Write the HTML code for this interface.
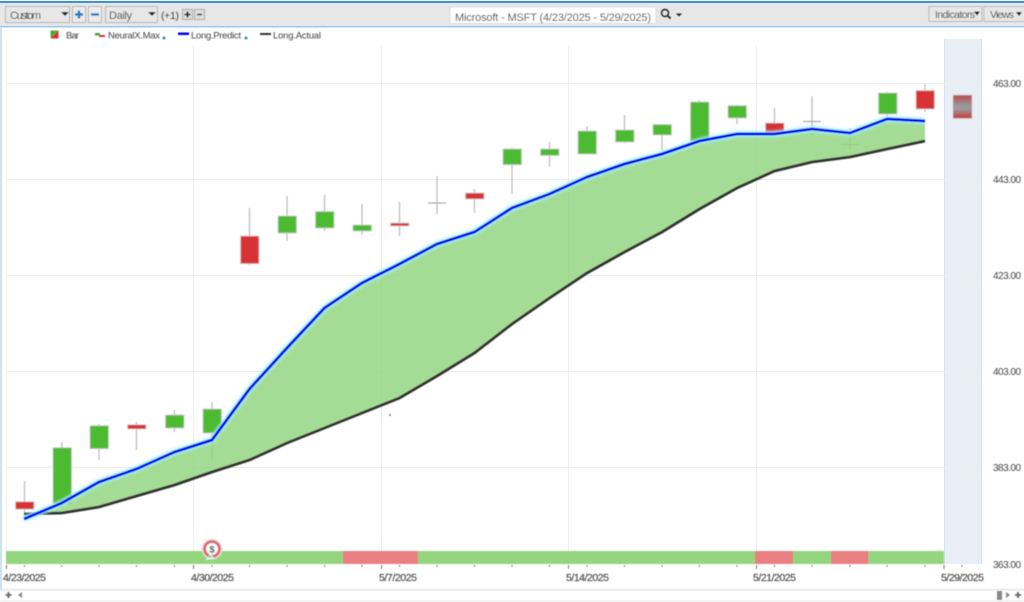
<!DOCTYPE html>
<html><head><meta charset="utf-8"><style>
html,body{margin:0;padding:0;background:#fff;width:1024px;height:602px;overflow:hidden}
svg{display:block}
text{font-family:"Liberation Sans",sans-serif;fill:#444}
</style></head><body>
<svg width="1024" height="602" viewBox="0 0 1024 602" xmlns="http://www.w3.org/2000/svg">
<defs>
<linearGradient id="gh" x1="0" y1="0" x2="0" y2="1"><stop offset="0" stop-color="#c0484c"/><stop offset=".45" stop-color="#999"/><stop offset=".6" stop-color="#999"/><stop offset="1" stop-color="#c8383c"/></linearGradient>
<filter id="soft" x="-5%" y="-5%" width="110%" height="110%"><feGaussianBlur stdDeviation="0.45"/></filter>
<filter id="glow" x="-5%" y="-5%" width="110%" height="110%"><feGaussianBlur stdDeviation="1.2"/></filter>
</defs>
<rect width="1024" height="602" fill="#fff"/>
<!-- toolbar -->
<rect x="0" y="0" width="1024" height="27" fill="#e7e7e7"/>
<rect x="0" y="0" width="1024" height="1" fill="#f6f6f6"/>
<rect x="0" y="1" width="1024" height="2" fill="#3d93d3"/>
<rect x="0" y="26" width="1024" height="1.5" fill="#9cc9ea"/>
<rect x="0" y="27" width="2" height="563" fill="#cfe2f1"/>
<g filter="url(#soft)">
<rect x="5.5" y="6.5" width="64" height="16" fill="#e7e7e7" stroke="#b4b4b4"/>
<text x="10" y="19" font-size="11" textLength="31">Custom</text>
<path d="M61 12h8l-4 4z" fill="#222"/>
<rect x="72.5" y="6.5" width="13" height="16" fill="#ececec" stroke="#b4b4b4"/>
<path d="M75 14.5h8M79 10.5v8" stroke="#1d7cc4" stroke-width="2.4"/>
<rect x="88.5" y="6.5" width="13" height="16" fill="#ececec" stroke="#b4b4b4"/>
<path d="M91 14.5h8" stroke="#1d7cc4" stroke-width="2.4"/>
<rect x="105.5" y="6.5" width="52" height="16" fill="#e7e7e7" stroke="#b4b4b4"/>
<text x="109" y="19" font-size="11" textLength="23">Daily</text>
<path d="M148 12h8l-4 4z" fill="#222"/>
<text x="161" y="19" font-size="10.500" textLength="18">(+1)</text>
<rect x="182.500" y="9.500" width="10" height="10" fill="#ddd" stroke="#aaa"/>
<path d="M184.500 14.500h6M187.500 11.500v6" stroke="#111" stroke-width="1.600"/>
<rect x="194.500" y="9.500" width="10" height="10" fill="#ddd" stroke="#aaa"/>
<path d="M197 14.500h5" stroke="#111" stroke-width="1.400"/>
<rect x="450" y="7" width="206" height="16.500" rx="1" fill="#fff" stroke="#ddd"/>
<text x="455" y="21" font-size="11" textLength="196">Microsoft - MSFT (4/23/2025 - 5/29/2025)</text>
<circle cx="665" cy="13" r="3.500" fill="none" stroke="#222" stroke-width="1.400"/>
<path d="M667.500 15.500l3 3" stroke="#222" stroke-width="1.800"/>
<path d="M676 13.500h6l-3 3z" fill="#222"/>
<rect x="929" y="6.500" width="53" height="15" fill="#e7e7e7" stroke="#b8b8b8"/>
<text x="935" y="18" font-size="10.500" textLength="40">Indicators</text>
<path d="M974 11.500h6l-3 4z" fill="#111"/>
<rect x="984" y="6.500" width="42" height="15" fill="#e7e7e7" stroke="#b8b8b8"/>
<text x="990" y="18" font-size="10.500" textLength="24">Views</text>
<path d="M1016 12h6l-3 4z" fill="#111"/>
<!-- legend -->
<rect x="50.500" y="30.500" width="8" height="8" fill="#d93036"/>
<path d="M50.500 30.500h8l-8 8z" fill="#44b02e"/>
<text x="66" y="38.500" font-size="9.500" textLength="13">Bar</text>
<path d="M95 33h5v2.500h-5z" fill="#3aa82c"/><path d="M99 35h6v2h-6z" fill="#d93036"/>
<text x="108" y="38.500" font-size="9.500" textLength="52">NeuralX.Max</text>
<circle cx="164" cy="38" r="1.500" fill="#3b8ea8"/>
<rect x="178" y="32.500" width="11" height="2.500" fill="#0000e6"/>
<text x="191" y="38.500" font-size="9.500" textLength="50">Long.Predict</text>
<circle cx="246" cy="38" r="1.500" fill="#3b8ea8"/>
<rect x="260" y="33" width="11" height="2" fill="#333"/>
<text x="273" y="38.500" font-size="9.500" textLength="48">Long.Actual</text>
</g>
<!-- forecast band -->
<rect x="944" y="39" width="38" height="525" fill="#e8eef6"/>
<path d="M944.500 39v525M981.500 39v525" stroke="#d3e3f3"/>
<!-- grid -->
<g stroke="#eeeeee" stroke-width="1">
<path d="M6 83.500H982M6 179.500H982M6 275.500H982M6 371.500H982M6 467.500H982"/>
<path d="M6.500 40V564M193.500 46V564M381.500 46V564M568.500 46V564M756.500 46V564"/>
</g>
<g filter="url(#soft)">
<!-- candles -->
<g stroke="#b9b9b9" stroke-width="1.200">
<path d="M24.500 481V515M61.800 442V508M99 424V460M136.500 422V450M174.500 410V432M212 402V461M249.500 208V265M287 196V241M324.500 195V231M362 204V235M399.500 202V236M437 176V214M474.500 189V213M512 148V194M549.500 142V167M587 126V154M624.500 115V143M662 124V151M699.500 100V141M737 105V124M774.500 108V135M812 96V135M850 128V150M887 92V116M925 84V112"/>
<path d="M428 203H446M803 121.500H821M841 144.500H859" stroke="#aaa"/>
</g>
<g stroke="#cccccc" stroke-width=".8">
<g fill="#d93036">
<rect x="15.500" y="501.700" width="18.500" height="7.500"/>
<rect x="127.500" y="424.700" width="18.500" height="4.300"/>
<rect x="240.500" y="236" width="18.500" height="27.700"/>
<rect x="390.500" y="223" width="18.500" height="3"/>
<rect x="465.500" y="193" width="18.500" height="6"/>
<rect x="765.500" y="123" width="18.500" height="10"/>
<rect x="916" y="90.500" width="18.500" height="18.500"/>
</g>
<g fill="#4dbb33">
<rect x="53" y="447.700" width="18.500" height="56"/>
<rect x="90" y="425.700" width="18.500" height="23"/>
<rect x="165.500" y="415" width="18.500" height="13"/>
<rect x="203" y="409" width="18.500" height="24"/>
<rect x="278" y="216" width="18.500" height="17"/>
<rect x="315.500" y="211.500" width="18.500" height="16.500"/>
<rect x="353" y="225" width="18.500" height="6"/>
<rect x="503" y="149" width="18.500" height="15.700"/>
<rect x="540.500" y="149" width="18.500" height="6.500"/>
<rect x="578" y="131" width="18.500" height="23"/>
<rect x="615.500" y="130" width="18.500" height="12"/>
<rect x="653" y="124.500" width="18.500" height="10.500"/>
<rect x="690.500" y="102" width="18.500" height="39"/>
<rect x="728" y="105.700" width="18.500" height="12.300"/>
<rect x="878.500" y="93" width="18.500" height="21"/>
</g>
<rect x="953" y="95" width="19" height="23.500" fill="url(#gh)"/>
</g>
<!-- area (translucent, drawn over candles) -->
<path d="M24 519L61.800 503L99 482L136.500 469L174.500 452L212 440L249.500 389L287 348L324.500 308L362 283L399.500 264L437 244L474.500 232L512 208L549.500 194L587 177L624.500 164L662 154L699.500 141L737 134L774.500 134L812 129L850 133L887 119L925 121L925 141L887 149L850 157L812 162L774.500 171L737 188L699.500 209L662 232L624.500 252L587 273L549.500 298L512 324L474.500 353L437 376L399.500 398L362 413L324.500 428L287 443L249.500 460L212 472L174.500 485L136.500 496L99 507L61.800 513L24 514Z" fill="#8fd37b" fill-opacity=".8"/>
<!-- lines -->
<path d="M24 514L61.800 513L99 507L136.500 496L174.500 485L212 472L249.500 460L287 443L324.500 428L362 413L399.500 398L437 376L474.500 353L512 324L549.500 298L587 273L624.500 252L662 232L699.500 209L737 188L774.500 171L812 162L850 157L887 149L925 141" fill="none" stroke="#333" stroke-width="2.800"/>
<path d="M24 519L61.800 503L99 482L136.500 469L174.500 452L212 440L249.500 389L287 348L324.500 308L362 283L399.500 264L437 244L474.500 232L512 208L549.500 194L587 177L624.500 164L662 154L699.500 141L737 134L774.500 134L812 129L850 133L887 119L925 121" fill="none" stroke="#9ff3fb" stroke-width="6" filter="url(#glow)"/>
<path d="M24 519L61.800 503L99 482L136.500 469L174.500 452L212 440L249.500 389L287 348L324.500 308L362 283L399.500 264L437 244L474.500 232L512 208L549.500 194L587 177L624.500 164L662 154L699.500 141L737 134L774.500 134L812 129L850 133L887 119L925 121" fill="none" stroke="#0000ee" stroke-width="2.800"/>
<!-- status bar -->
<rect x="6" y="551" width="938" height="13" fill="#93d67f"/>
<rect x="343" y="551" width="75" height="13" fill="#e97f80"/>
<rect x="755" y="551" width="38" height="13" fill="#e97f80"/>
<rect x="831" y="551" width="37.500" height="13" fill="#e97f80"/>
<!-- $ badge -->
<circle cx="212" cy="549" r="10" fill="#fff" opacity=".9" stroke="#ddd"/>
<circle cx="212" cy="549" r="7.500" fill="none" stroke="#df6a6c" stroke-width="3"/>
<path d="M206 560L210 553.500L214 558Z" fill="#fff"/><path d="M207.500 558L210 554.500L212.500 557.500Z" fill="#8bcf78"/>
<text x="212" y="552.500" font-size="9.500" text-anchor="middle" font-weight="bold" style="fill:#444">$</text>
<circle cx="390" cy="415" r=".8" fill="#222"/>
<!-- ticks -->
<path d="M6.500 565v4M24.500 565v2M61.800 565v2M99 565v2M136.500 565v2M174.500 565v2M193.500 565v4M212 565v2M249.500 565v2M287 565v2M324.500 565v2M362 565v2M381.500 565v4M399.500 565v2M437 565v2M474.500 565v2M512 565v2M549.500 565v2M568.500 565v4M587 565v2M624.500 565v2M662 565v2M699.500 565v2M737 565v2M756.500 565v4M774.500 565v2M812 565v2M850 565v2M887 565v2M925 565v2M944 565v4M962 565v2" stroke="#777" stroke-width="1"/>
<!-- date labels -->
<g font-size="10.500">
<text x="3" y="581" textLength="43" style="fill:#555;stroke:#555;stroke-width:.25">4/23/2025</text>
<text x="191" y="581" textLength="43" style="fill:#555;stroke:#555;stroke-width:.25">4/30/2025</text>
<text x="379" y="581" textLength="38" style="fill:#555;stroke:#555;stroke-width:.25">5/7/2025</text>
<text x="566" y="581" textLength="43" style="fill:#555;stroke:#555;stroke-width:.25">5/14/2025</text>
<text x="753" y="581" textLength="43" style="fill:#555;stroke:#555;stroke-width:.25">5/21/2025</text>
<text x="941" y="581" textLength="43" style="fill:#555;stroke:#555;stroke-width:.25">5/29/2025</text>
</g>
<!-- price labels -->
<g font-size="10">
<text x="993" y="87" textLength="28">463.00</text>
<text x="993" y="183" textLength="28">443.00</text>
<text x="993" y="279" textLength="28">423.00</text>
<text x="993" y="375" textLength="28">403.00</text>
<text x="993" y="471" textLength="28">383.00</text>
<text x="993" y="568" textLength="28">363.00</text>
</g>
<!-- scrollbar -->
<rect x="0" y="589" width="1024" height="1.500" fill="#e4e4e4"/>
<rect x="0" y="600.500" width="1024" height="1.500" fill="#ececec"/>
<path d="M5.500 595h6M8.500 592v6" stroke="#666" stroke-width="1.800"/>
<path d="M22 592v6l-4-3z" fill="#888"/>
<rect x="997" y="591" width="5" height="9" fill="#888"/>
<path d="M1006 592v6l4-3z" fill="#888"/>
<path d="M1015 595h6M1018 592v6" stroke="#666" stroke-width="1.800"/>
</g>
</svg>
</body></html>
